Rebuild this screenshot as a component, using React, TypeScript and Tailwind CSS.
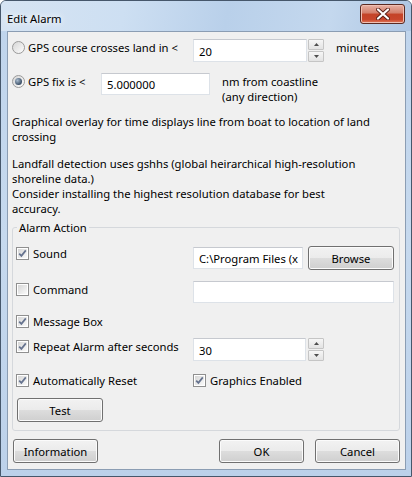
import React from "react";

function Check({ checked }: { checked?: boolean }) {
  return (
    <span className="flex h-[13px] w-[13px] shrink-0 items-center justify-center border border-[#8f8f8f] bg-white p-[1px]">
      <span className="flex h-full w-full items-center justify-center bg-linear-to-br from-[#d6d6d6] to-[#fafafa]">
        {checked && (
          <svg width="9" height="9" viewBox="0 0 9 9">
            <path d="M1.2 4.6 L3.4 6.9 L7.8 1.4" fill="none" stroke="#66738f" strokeWidth="1.7" />
          </svg>
        )}
      </span>
    </span>
  );
}

function Radio({ checked }: { checked?: boolean }) {
  return (
    <span className="flex h-[13px] w-[13px] shrink-0 items-center justify-center rounded-full border border-[#9a9a9a] bg-linear-to-br from-[#d6d6d6] to-[#fdfdfd]">
      {checked && (
        <span className="h-[7px] w-[7px] rounded-full bg-[radial-gradient(circle_at_35%_35%,#a9bccf,#3b4f66_70%)]" />
      )}
    </span>
  );
}

function TextBox({ value, className }: { value?: string; className: string }) {
  return (
    <div
      className={
        "flex shrink-0 items-center overflow-hidden whitespace-nowrap border border-[#dde2e8] border-t-[#c6c9cf] bg-white pl-[5px] pt-[1px] " +
        className
      }
    >
      {value}
    </div>
  );
}

function Arrow({ up }: { up?: boolean }) {
  return (
    <svg width="5" height="3" viewBox="0 0 5 3">
      <path d={up ? "M0 3 L2.5 0 L5 3 Z" : "M0 0 L2.5 3 L5 0 Z"} fill="#4d4d4d" />
    </svg>
  );
}

function Spinner() {
  return (
    <div className="flex h-[23px] w-[16px] shrink-0 flex-col gap-[1px]">
      <div className="flex flex-1 items-center justify-center rounded-[1px] border border-[#c5c5c5] bg-linear-to-b from-[#f6f6f6] to-[#e3e3e3]">
        <Arrow up />
      </div>
      <div className="flex flex-1 items-center justify-center rounded-[1px] border border-[#c5c5c5] bg-linear-to-b from-[#f6f6f6] to-[#e3e3e3]">
        <Arrow />
      </div>
    </div>
  );
}

function Btn({ children, className }: { children: React.ReactNode; className?: string }) {
  return (
    <button
      className={
        "flex h-[24px] w-[85px] shrink-0 items-center justify-center rounded-[3px] border border-[#707070] bg-[linear-gradient(#f2f2f2_0%,#ebebeb_50%,#dddddd_50%,#cfcfcf_100%)] text-black shadow-[inset_0_0_0_1px_#fbfbfb] " +
        (className ?? "")
      }
    >
      {children}
    </button>
  );
}

function CheckLabel({ label, checked }: { label: string; checked?: boolean }) {
  return (
    <div className="flex h-[15px] items-center gap-[4px]">
      <Check checked={checked} />
      <span>{label}</span>
    </div>
  );
}

export default function App() {
  return (
    <div className="flex h-[477px] w-[412px] flex-col overflow-hidden rounded-t-[6px] border border-[#46576b] bg-linear-to-b from-[#bfd4ec] via-[#c6d9ee] to-[#bcd1ea] font-['Noto_Sans',sans-serif] text-[11.25px] leading-[15px] text-black">
      {/* Title bar */}
      <div className="flex h-[30px] shrink-0 items-start justify-between bg-[linear-gradient(100deg,#d6e4f3_0%,#cddff2_30%,#b9d0ea_55%,#c4d8ee_80%,#aec6e3_100%)]">
        <span className="ml-[6px] mt-[10px] [text-shadow:0_0_6px_#ffffff,0_0_10px_#ffffff]">
          Edit Alarm
        </span>
        <div className="mr-[6px] mt-[3px] flex h-[20px] w-[45px] items-center justify-center rounded-[3px] border border-[#5b2a22] bg-[linear-gradient(#e8b1a4_0%,#d37e6a_45%,#c44328_50%,#c8462c_80%,#e07a5c_100%)] shadow-[inset_0_0_0_1px_#f0c0b4]">
          <svg width="14" height="12" viewBox="0 0 14 12">
            <path d="M2 1.5 L12 10.5 M12 1.5 L2 10.5" stroke="#5a2018" strokeWidth="4" strokeLinecap="round" />
            <path d="M2 1.5 L12 10.5 M12 1.5 L2 10.5" stroke="#ffffff" strokeWidth="2.2" strokeLinecap="round" />
          </svg>
        </div>
      </div>

      {/* Client area */}
      <div className="mb-[6px] ml-[6px] mr-[5px] flex flex-1 flex-col border border-[#8b9db3] bg-[#f0f0f0]">
        <div className="flex flex-col pl-[4px]">
          {/* Course crosses land */}
          <div className="mt-[7px] flex h-[23px] items-start">
            <div className="flex w-[181px] shrink-0 items-center gap-[3px] pt-[1px]">
              <Radio />
              <span>GPS course crosses land in &lt;</span>
            </div>
            <TextBox value="20" className="h-[23px] w-[114px]" />
            <div className="ml-[1px]">
              <Spinner />
            </div>
            <span className="ml-[12px] pt-[1px]">minutes</span>
          </div>

          {/* GPS fix */}
          <div className="mt-[11px] flex items-start">
            <div className="flex w-[89px] shrink-0 items-center gap-[3px] pt-[1px]">
              <Radio checked />
              <span>GPS fix is &lt;</span>
            </div>
            <TextBox value="5.000000" className="h-[22px] w-[109px]" />
            <div className="ml-[12px] flex flex-col pt-[1px]">
              <span>nm from coastline</span>
              <span>(any direction)</span>
            </div>
          </div>

          <div className="mt-[10px]">
            <div>Graphical overlay for time displays line from boat to location of land</div>
            <div>crossing</div>
          </div>

          <div className="mt-[12px]">
            <div>Landfall detection uses gshhs (global heirarchical high-resolution</div>
            <div>shoreline data.)</div>
            <div>Consider installing the highest resolution database for best</div>
            <div>accuracy.</div>
          </div>

          {/* Alarm Action group */}
          <fieldset className="mt-[4px] w-[388px] rounded-[3px] border border-[#d5d8dc] pb-[8px] pl-[3px] pr-[5px]">
            <legend className="ml-[1px] px-[2px]">Alarm Action</legend>

            <div className="mt-[11px] flex h-[24px] items-start">
              <div className="w-[177px] shrink-0">
                <CheckLabel label="Sound" checked />
              </div>
              <TextBox value="C:\Program Files (x" className="mt-[1px] h-[22px] w-[110px]" />
              <Btn className="ml-[5px] w-[86px]">Browse</Btn>
            </div>

            <div className="mt-[11px] flex h-[22px] items-start">
              <div className="w-[177px] shrink-0 pt-[1px]">
                <CheckLabel label="Command" />
              </div>
              <TextBox className="h-[22px] w-[201px]" />
            </div>

            <div className="mt-[11px]">
              <CheckLabel label="Message Box" checked />
            </div>

            <div className="mt-[9px] flex h-[23px] items-start">
              <div className="w-[177px] shrink-0 pt-[1px]">
                <CheckLabel label="Repeat Alarm after seconds" checked />
              </div>
              <TextBox value="30" className="h-[23px] w-[113px]" />
              <div className="ml-[2px]">
                <Spinner />
              </div>
            </div>

            <div className="mt-[12px] flex items-start">
              <div className="w-[177px] shrink-0">
                <CheckLabel label="Automatically Reset" checked />
              </div>
              <CheckLabel label="Graphics Enabled" checked />
            </div>

            <Btn className="ml-[1px] mt-[10px] w-[86px]">Test</Btn>
          </fieldset>
        </div>

        {/* Dialog buttons */}
        <div className="ml-[5px] mr-[5px] mt-[8px] flex items-start">
          <Btn>Information</Btn>
          <div className="flex-1" />
          <Btn>OK</Btn>
          <Btn className="ml-[11px]">Cancel</Btn>
        </div>
      </div>
    </div>
  );
}
